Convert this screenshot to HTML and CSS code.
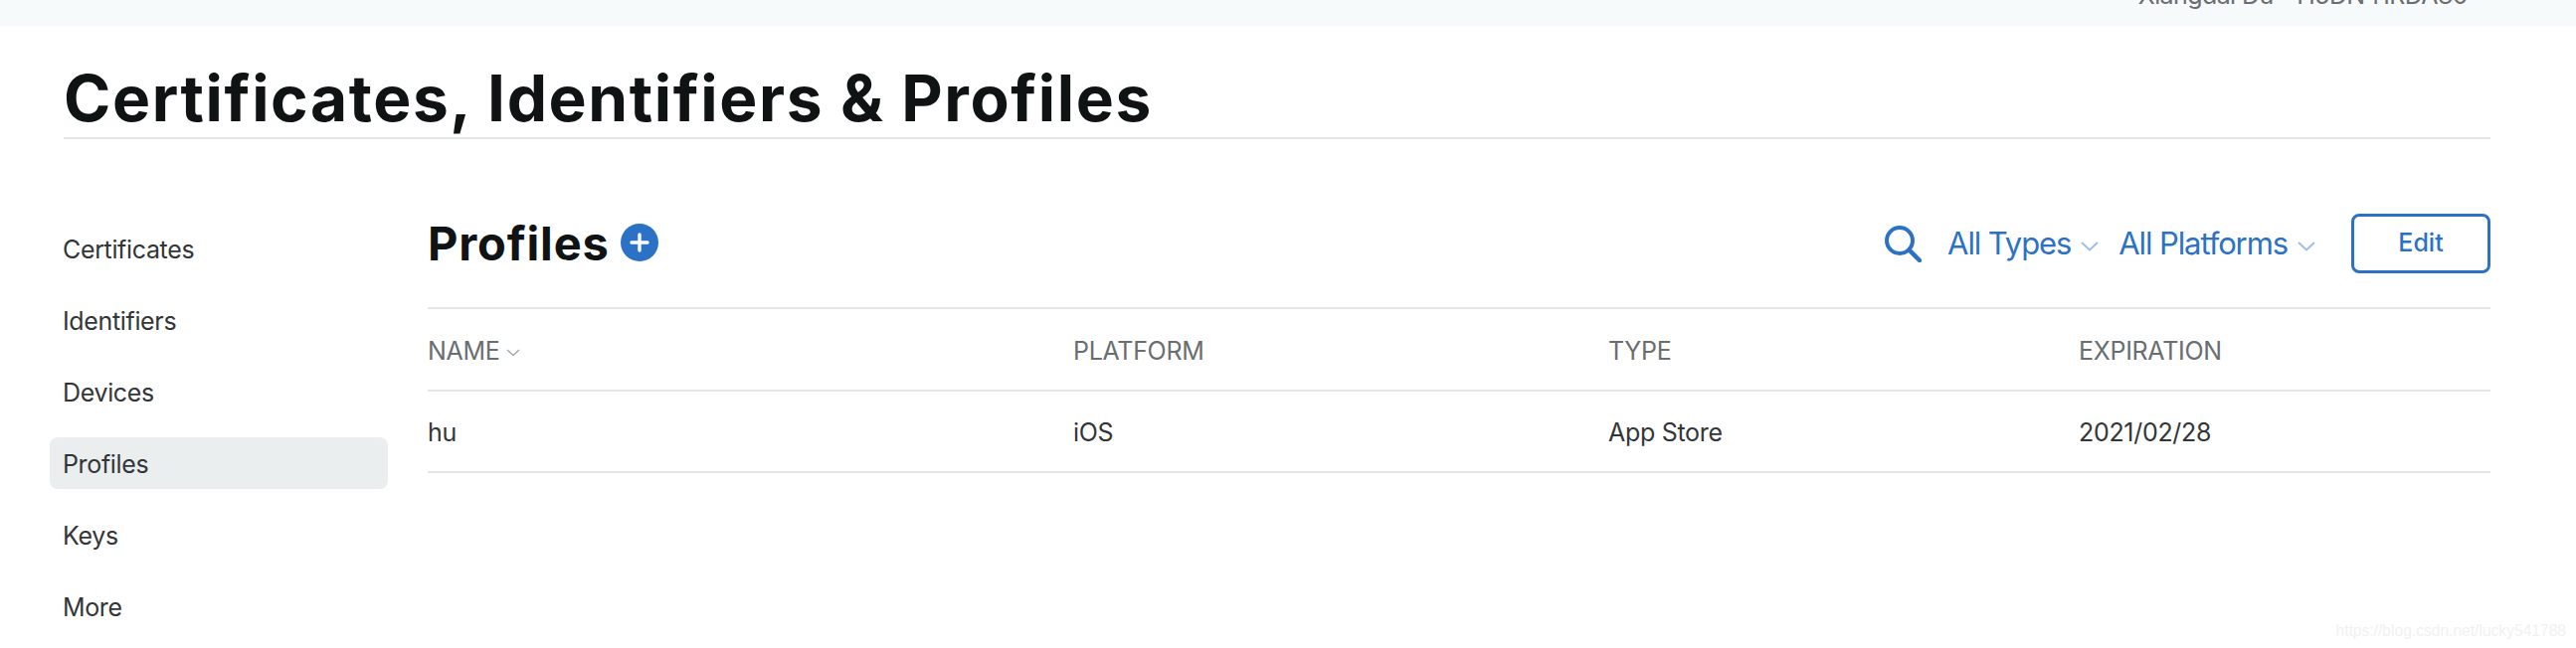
FILE: index.html
```html
<!DOCTYPE html>
<html lang="en">
<head>
<meta charset="utf-8">
<title>Certificates, Identifiers &amp; Profiles</title>
<link rel="stylesheet" href="styles.css">
</head>
<body>
<header class="topbar"><span class="account">Xiangdai Du - H5DN41RDA80</span></header>
<div class="page">
  <h1 class="title">Certificates, Identifiers &amp; Profiles</h1>
  <div class="layout">
    <nav class="sidenav">
      <a class="navitem">Certificates</a>
      <a class="navitem">Identifiers</a>
      <a class="navitem">Devices</a>
      <a class="navitem active">Profiles</a>
      <a class="navitem">Keys</a>
      <a class="navitem">More</a>
    </nav>
    <main class="content">
      <div class="toolbar">
        <h2 class="heading">Profiles</h2>
        <svg class="plus" viewBox="0 0 38 38" aria-hidden="true"><circle cx="19" cy="19" r="19" fill="#2b72c6"/><path d="M19 11v16M11 19h16" stroke="#fff" stroke-width="3.4" stroke-linecap="round"/></svg>
        <div class="tools">
          <svg class="search" viewBox="0 0 38 38" aria-hidden="true"><circle cx="16" cy="16" r="13" fill="none" stroke="#2b72c6" stroke-width="4"/><path d="M25.5 25.5L36 36" stroke="#2b72c6" stroke-width="4.5" stroke-linecap="round"/></svg>
          <span class="filter types">All Types<svg class="chev" viewBox="0 0 18 10" aria-hidden="true"><path d="M1 1l8 7.5L17 1" fill="none" stroke="#9bbfe6" stroke-width="2"/></svg></span>
          <span class="filter platforms">All Platforms<svg class="chev" viewBox="0 0 18 10" aria-hidden="true"><path d="M1 1l8 7.5L17 1" fill="none" stroke="#9bbfe6" stroke-width="2"/></svg></span>
          <button class="edit">Edit</button>
        </div>
      </div>
      <div class="row head">
        <span class="cell">NAME<svg class="sort" viewBox="0 0 14 8" aria-hidden="true"><path d="M1 1l6 5.5L13 1" fill="none" stroke="#a9acae" stroke-width="1.6"/></svg></span>
        <span class="cell">PLATFORM</span>
        <span class="cell">TYPE</span>
        <span class="cell">EXPIRATION</span>
      </div>
      <div class="row">
        <span class="cell">hu</span>
        <span class="cell">iOS</span>
        <span class="cell">App Store</span>
        <span class="cell">2021/02/28</span>
      </div>
    </main>
  </div>
</div>
<span class="watermark">https://blog.csdn.net/lucky541788</span>
</body>
</html>
```
FILE: styles.css
```css
* { box-sizing: border-box; }
html, body { margin: 0; height: 652px; overflow: hidden; background: #fff; }
body { font-family: Inter, "Liberation Sans", sans-serif; color: #333638; position: relative; }

.topbar { height: 26px; background: #f7fafb; display: flex; justify-content: flex-end; align-items: flex-start; padding-right: 109px; overflow: hidden; }
.account { font-size: 25px; line-height: 30px; letter-spacing: -0.6px; color: #6a6e70; flex: none; margin-top: -20px; }

.page { padding: 0 86px 0 64px; }
.title { margin: 0; height: 114px; padding-top: 37px; border-bottom: 2px solid #e3e5e6; font-size: 64px; line-height: 72px; font-weight: 700; color: #0f1314; letter-spacing: 1.6px; white-space: nowrap; }

.layout { display: flex; margin-top: 71px; }
.sidenav { width: 380px; flex: none; display: flex; flex-direction: column; gap: 20px; margin-left: -14px; padding-top: 13px; }
.navitem { width: 340px; height: 52px; padding: 1px 0 0 13px; border-radius: 8px; font-size: 25px; line-height: 52px; letter-spacing: -0.35px; color: #333638; }
.active { background: #ebeeef; }

.content { flex: 1; }
.toolbar { display: flex; align-items: center; height: 100px; border-bottom: 2px solid #e3e5e6; padding-bottom: 31px; }
.heading { margin: 0; font-size: 47px; line-height: 60px; font-weight: 700; letter-spacing: 0.8px; color: #0f1314; }
.plus { width: 38px; height: 38px; margin-left: 11px; margin-top: -1px; }
.tools { margin-left: auto; display: flex; align-items: center; }
.search { width: 38px; height: 38px; }
.filter { font-size: 31px; line-height: 40px; letter-spacing: -1.1px; color: #2b72c6; display: flex; align-items: center; white-space: nowrap; }
.types { margin-left: 26px; }
.platforms { margin-left: 20px; }
.chev { width: 18px; height: 10px; margin-left: 10px; margin-top: 6px; }
.edit { width: 140px; height: 60px; margin-left: 36px; background: #fff; border: 3px solid #2b72c6; border-radius: 8px; font: 500 25px Inter, "Liberation Sans", sans-serif; color: #2b72c6; padding: 0 0 2px; }

.row { display: grid; grid-template-columns: 649px 538px 473px 1fr; height: 82px; padding-top: 2px; border-bottom: 2px solid #e3e5e6; align-items: center; font-size: 25px; letter-spacing: -0.3px; color: #333638; }
.head { height: 83px; color: #6a6e70; }
.cell { display: flex; align-items: center; }
.sort { width: 14px; height: 8px; margin-left: 6px; margin-top: 4px; }

.watermark { position: absolute; right: 10px; top: 626px; font: 15.6px "Liberation Sans", sans-serif; color: #f1f1f1; }
```
